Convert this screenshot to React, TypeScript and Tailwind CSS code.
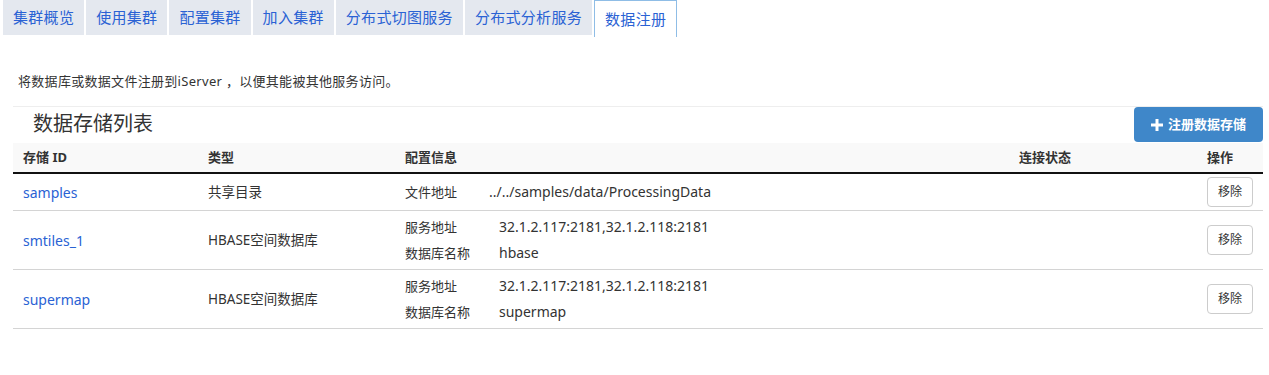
import React from "react";

const tabs = ["集群概览", "使用集群", "配置集群", "加入集群", "分布式切图服务", "分布式分析服务", "数据注册"];

const rows = [
  { id: "samples", type: "共享目录", conf: [["文件地址", "../../samples/data/ProcessingData"]], short: true },
  {
    id: "smtiles_1",
    type: "HBASE空间数据库",
    conf: [
      ["服务地址", "32.1.2.117:2181,32.1.2.118:2181"],
      ["数据库名称", "hbase"],
    ],
  },
  {
    id: "supermap",
    type: "HBASE空间数据库",
    conf: [
      ["服务地址", "32.1.2.117:2181,32.1.2.118:2181"],
      ["数据库名称", "supermap"],
    ],
  },
];

const cols = "grid grid-cols-[185px_197px_614px_188px_66px]";

export default function App() {
  return (
    <div
      className="w-[1269px] h-[375px] bg-white text-[#333] overflow-hidden"
      style={{ fontFamily: '"Noto Sans", "Noto Sans CJK SC", sans-serif' }}
    >
      {/* tabs */}
      <div className="flex pl-[3px] gap-[2px] h-[37px]">
        {tabs.map((t, i) =>
          i === tabs.length - 1 ? (
            <div
              key={t}
              className="h-[37px] px-[10px] flex items-center text-[15px] tracking-[0.3px] text-[#2a62d4] bg-white border border-b-0 border-[#8fbde6]"
            >
              {t}
            </div>
          ) : (
            <div
              key={t}
              className="h-[35px] px-[10px] flex items-center text-[15px] tracking-[0.3px] text-[#2a62d4] bg-[#e4e8ef]"
            >
              {t}
            </div>
          )
        )}
      </div>

      <p className="mt-[35px] ml-[18px] text-[13px] leading-[18px] tracking-[0.3px]">
        将数据库或数据文件注册到iServer ，以便其能被其他服务访问。
      </p>

      <div className="mx-[13px] mt-[16px] w-[1250px]">
        {/* title */}
        <div className="border-t border-[#eee] flex items-start justify-between h-[37px]">
          <h2 className="ml-[20px] mt-[2px] text-[20px] leading-[30px] text-[#333]">数据存储列表</h2>
          <button className="w-[129px] h-[35px] rounded-[4px] bg-[#3f87c9] text-white text-[13px] font-bold flex items-center justify-center gap-[5px]">
            <svg width="12" height="12" viewBox="0 0 12 12">
              <path d="M4.5 0h3v4.5H12v3H7.5V12h-3V7.5H0v-3h4.5z" fill="#fff" />
            </svg>
            注册数据存储
          </button>
        </div>

        {/* header */}
        <div className={`${cols} h-[31px] bg-[#f9f9f9] border-b-2 border-[#111] items-center text-[13px] font-bold`}>
          <div className="px-[10px]">存储 ID</div>
          <div className="px-[10px]">类型</div>
          <div className="px-[10px]">配置信息</div>
          <div className="px-[10px]">连接状态</div>
          <div className="px-[10px]">操作</div>
        </div>

        {rows.map((r) => (
          <div
            key={r.id}
            className={`${cols} border-b border-[#d4d4d4] items-center text-[14px] ${r.short ? "h-[37px]" : "h-[59px]"}`}
          >
            <div className="px-[10px] text-[#2a62d4]">{r.id}</div>
            <div className="px-[10px] text-[13.5px]">{r.type}</div>
            <div className="px-[10px] flex flex-col gap-[6px]">
              {r.conf.map(([k, v]) => (
                <div key={k} className="flex items-center leading-[20px]">
                  <span className={`text-[13px] ${r.short ? "w-[84px]" : "w-[94px]"}`}>{k}</span>
                  <span className="text-[14px]">{v}</span>
                </div>
              ))}
            </div>
            <div />
            <div className="px-[10px]">
              <button className="w-[46px] h-[30px] border border-[#ccc] rounded-[4px] bg-white text-[12px] text-[#333]">
                移除
              </button>
            </div>
          </div>
        ))}
      </div>
    </div>
  );
}
